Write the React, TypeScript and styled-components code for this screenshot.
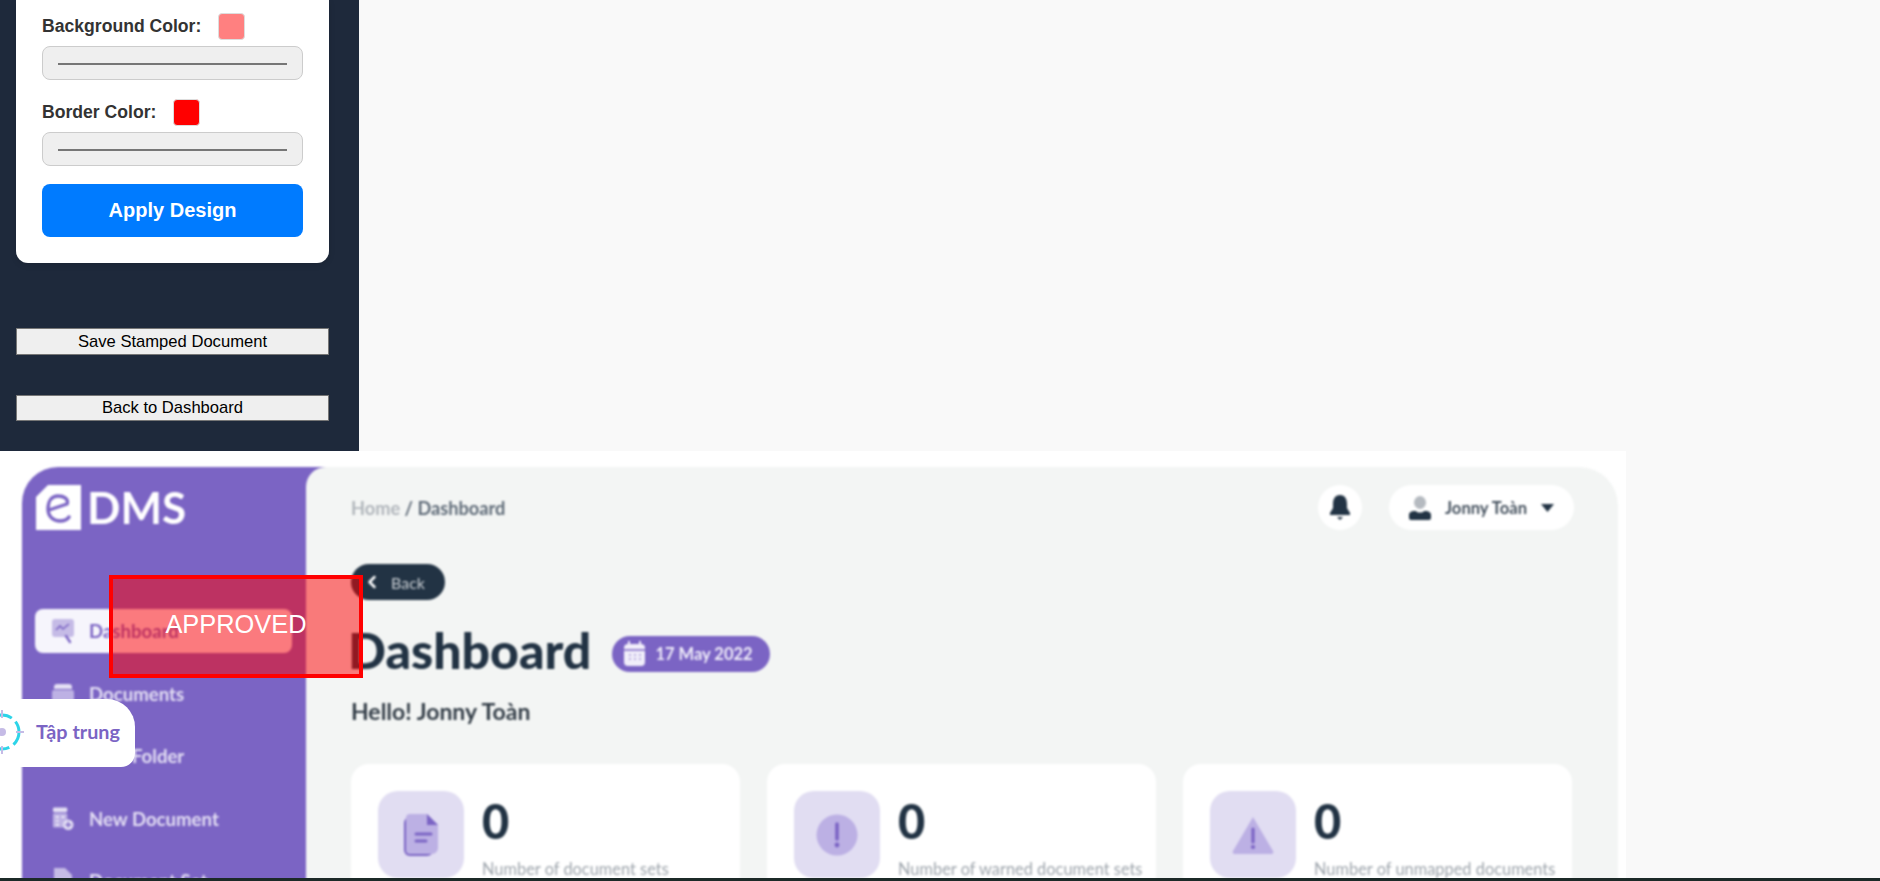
import React from 'react'
import styled, { createGlobalStyle } from 'styled-components'
import { ChevronLeft } from 'lucide-react'

const GlobalStyle = createGlobalStyle`
  html, body {
    margin: 0;
    padding: 0;
    height: 100%;
    overflow: hidden;
    background: #f9f9f9;
    font-family: "Liberation Sans", Arial, sans-serif;
  }
`

const Page = styled.div`
  position: relative;
  width: 1880px;
  height: 881px;
  overflow: hidden;
  display: flex;
  flex-direction: column;
`

const Tools = styled.aside`
  width: 359px;
  height: 451px;
  flex-shrink: 0;
  box-sizing: border-box;
  background: #1e293b;
  padding: 0 30px 30px 16px;
  display: flex;
  flex-direction: column;
  justify-content: flex-end;
  overflow: hidden;
`

const DesignCard = styled.div`
  background: #fff;
  border-radius: 0 0 12px 12px;
  padding: 13px 26px 26px;
  display: flex;
  flex-direction: column;
  box-shadow: 0 2px 6px rgba(0, 0, 0, 0.12);
`

const LabelRow = styled.div`
  display: flex;
  align-items: center;
  gap: ${(p: { $gap: number }) => p.$gap}px;
  height: 27px;
  color: #333;
  font-size: 17.6px;
  font-weight: 700;
  line-height: 25px;
  margin-bottom: 6px;
`

const Swatch = styled.span<{ $color: string }>`
  width: 27px;
  height: 27px;
  margin-left: -1px;
  box-sizing: border-box;
  border-radius: 4px;
  border: 1px solid #ddd;
  background: ${(p) => p.$color};
`

const ColorField = styled.div`
  height: 34px;
  box-sizing: border-box;
  border: 1px solid #ccc;
  border-radius: 8px;
  background: #efefef;
  padding: 0 15px;
  display: flex;
  align-items: center;
  margin-bottom: 19px;
`

const FieldLine = styled.span`
  display: block;
  width: 100%;
  height: 2px;
  background: #767676;
  margin-top: 2px;
`

const ApplyButton = styled.button`
  height: 53px;
  margin-top: -1px;
  border: 0;
  border-radius: 8px;
  background: #007bff;
  color: #fff;
  font-family: inherit;
  font-size: 20px;
  font-weight: 700;
`

const PlainButton = styled.button<{ $top: number; $height: number }>`
  height: ${(p) => p.$height}px;
  flex-shrink: 0;
  margin-top: ${(p) => p.$top}px;
  padding: 0;
  box-sizing: border-box;
  border: 1px solid #767676;
  border-radius: 0;
  background: #efefef;
  color: #000;
  font-family: inherit;
  font-size: 16.6px;
`

const Shot = styled.div`
  width: 1626px;
  height: 427px;
  flex-shrink: 0;
  box-sizing: border-box;
  background: #fff;
  padding: 16px 8px 0 22px;
  overflow: hidden;
  font-family: Lato, "Noto Sans", sans-serif;
`

const Frame = styled.div`
  display: flex;
  height: 420px;
  overflow: hidden;
  border-radius: 36px 38px 0 0;
  background: linear-gradient(to right, #7b64c4 320px, transparent 320px);
  filter: blur(1px);
`

const SideNav = styled.nav`
  width: 284px;
  flex-shrink: 0;
  box-sizing: border-box;
  padding: 18px 14px 0 13px;
  display: flex;
  flex-direction: column;
`

const Brand = styled.div`
  display: flex;
  align-items: center;
  gap: 6px;
  height: 45px;
  margin: 0 0 79px 1px;
  color: #fff;
  font-size: 44px;
  line-height: 45px;
  font-weight: 700;
`

const NavItem = styled.div<{ $active?: boolean }>`
  height: 44px;
  flex-shrink: 0;
  display: flex;
  align-items: center;
  gap: 15px;
  padding-left: 17px;
  margin-bottom: 18.5px;
  border-radius: 8px;
  background: ${(p) => (p.$active ? '#f6f5fc' : 'transparent')};
  color: ${(p) => (p.$active ? '#7b64c4' : '#e4dff4')};
  font-size: 18.6px;
  font-weight: 700;
  svg { flex-shrink: 0; }
`

const Main = styled.main`
  flex: 1;
  min-width: 0;
  box-sizing: border-box;
  background: #f3f5f4;
  border-radius: 20px 38px 0 0;
  padding: 18px 44px 0 45px;
  display: flex;
  flex-direction: column;
  align-items: flex-start;
`

const TopBar = styled.header`
  align-self: stretch;
  height: 45px;
  flex-shrink: 0;
  display: flex;
  align-items: center;
  justify-content: space-between;
`

const Crumbs = styled.div`
  font-size: 18.2px;
  font-weight: 700;
  color: #5f6b78;
  span { color: #b0b5bb; }
`

const UserArea = styled.div`
  display: flex;
  align-items: center;
  gap: 27px;
`

const BellButton = styled.div`
  width: 44px;
  height: 45px;
  border-radius: 50%;
  background: #fff;
  display: flex;
  align-items: center;
  justify-content: center;
`

const UserPill = styled.div`
  width: 185px;
  height: 45px;
  box-sizing: border-box;
  padding-left: 20px;
  border-radius: 23px;
  background: #fff;
  display: flex;
  align-items: center;
  gap: 14px;
  font-size: 16.6px;
  font-weight: 700;
  color: #46525f;
`

const BackPill = styled.div`
  margin-top: 34px;
  width: 94px;
  height: 36px;
  flex-shrink: 0;
  box-sizing: border-box;
  padding-left: 11px;
  border-radius: 18px;
  background: #223344;
  color: #c9ced3;
  display: flex;
  align-items: center;
  gap: 9px;
  font-size: 16px;
`

const TitleRow = styled.div`
  margin-top: 19px;
  display: flex;
  align-items: center;
  gap: 21px;
  height: 62px;
  flex-shrink: 0;
`

const Title = styled.h1`
  margin: 0 0 0 -3px;
  font-size: 50px;
  font-weight: 900;
  color: #223344;
  line-height: 62px;
`

const DatePill = styled.div`
  width: 158px;
  height: 36px;
  margin-top: 8px;
  box-sizing: border-box;
  padding-left: 12px;
  border-radius: 18px;
  background: #7b64c4;
  color: #f1eefa;
  display: flex;
  align-items: center;
  gap: 10px;
  font-size: 16.5px;
  font-weight: 700;
`

const Hello = styled.div`
  margin-top: 16px;
  font-size: 23px;
  font-weight: 700;
  color: #343e48;
`

const Cards = styled.div`
  margin-top: 39px;
  align-self: stretch;
  display: grid;
  grid-template-columns: repeat(3, 389px);
  column-gap: 27px;
`

const StatCard = styled.div`
  height: 160px;
  box-sizing: border-box;
  background: #fff;
  border-radius: 18px;
  padding: 27px 0 0 27px;
  display: flex;
  gap: 18px;
`

const IconTile = styled.div`
  width: 86px;
  height: 87px;
  flex-shrink: 0;
  border-radius: 20px;
  background: #e1ddf2;
  display: flex;
  align-items: center;
  justify-content: center;
`

const StatText = styled.div`
  display: flex;
  flex-direction: column;
  padding-top: 2px;
`

const StatValue = styled.div`
  font-size: 47px;
  line-height: 56px;
  font-weight: 900;
  color: #223344;
`

const StatLabel = styled.div`
  margin-top: 10px;
  font-size: 16.4px;
  white-space: nowrap;
  color: #9ea5ac;
`

const Stamp = styled.div`
  position: absolute;
  left: 109px;
  top: 575px;
  width: 254px;
  height: 103px;
  box-sizing: border-box;
  border: 4px solid #f00;
  background: rgba(255, 0, 0, 0.5);
  color: #fff;
  font-size: 25.4px;
  display: flex;
  align-items: center;
  justify-content: center;
  padding-bottom: 5px;
`

const FocusTab = styled.div`
  position: absolute;
  left: 0;
  top: 699px;
  width: 135px;
  height: 68px;
  box-sizing: border-box;
  padding: 0 0 4px 36px;
  border-radius: 0 28px 14px 0;
  background: #fff;
  color: #7b64c4;
  display: flex;
  align-items: center;
  font-family: Lato, "Noto Sans", sans-serif;
  font-size: 19.8px;
  font-weight: 700;
  overflow: hidden;
`

const FocusIcon = styled.svg`
  position: absolute;
  left: -20px;
  top: 11px;
`

const BottomEdge = styled.div`
  height: 3px;
  flex-shrink: 0;
  background: #1c2a28;
`

const LogoMark = () => (
  <svg width="45" height="45" viewBox="0 0 45 45">
    <path d="M12 0H45V45H0V12Z" fill="#fff" />
    <path
      d="M13 25 L31 19 C33 14 28 11 22 11 C15 11 12 17 12 24 C12 32 18 36 24 36 C28 36 31 35 33 32"
      fill="none"
      stroke="#7b64c4"
      strokeWidth="3.4"
      strokeLinecap="round"
    />
  </svg>
)

const ChartIcon = () => (
  <svg width="22" height="26" viewBox="0 0 22 26">
    <rect width="22" height="18" y="1" rx="3" fill="#c5bbe6" />
    <path d="M4 12l4-4 3 3 6-5" fill="none" stroke="#7b64c4" strokeWidth="1.6" />
    <path d="M14 18l4 6" stroke="#7b64c4" strokeWidth="2.4" strokeLinecap="round" />
  </svg>
)

const TrayIcon = () => (
  <svg width="22" height="22" viewBox="0 0 22 22">
    <path d="M2 4a3 3 0 0 1 3-3h12a3 3 0 0 1 3 3v2H2Z" fill="#e4dff4" />
    <rect y="7" width="22" height="13" rx="2" fill="#bdb1e4" />
  </svg>
)

const NewDocIcon = () => (
  <svg width="22" height="25" viewBox="0 0 23 25">
    <rect x="1" y="1" width="15" height="5" rx="1.5" fill="#e4dff4" />
    <rect x="1" y="7" width="15" height="15" rx="1.5" fill="#bdb1e4" />
    <path d="M4 11h3M10 11h3M4 15h3M4 19h3" stroke="#fff" strokeWidth="1.5" />
    <circle cx="17" cy="19" r="5.5" fill="#e4dff4" />
    <path d="M14 19h6M17 16v6" stroke="#7b64c4" strokeWidth="1.5" />
  </svg>
)

const SetIcon = () => (
  <svg width="22" height="26" viewBox="0 0 22 26">
    <path d="M2 0h11l7 7v19H2Z" fill="#c5bbe6" />
  </svg>
)

const BellIcon = () => (
  <svg width="20" height="25" viewBox="0 0 20 25">
    <path d="M10 0c5 0 7 4 7 9v4l3 5v2H0v-2l3-5V9c0-5 2-9 7-9Z" fill="#223344" />
    <path d="M7 22h6l-3 3Z" fill="#223344" />
  </svg>
)

const UserIcon = () => (
  <svg width="22" height="24" viewBox="0 0 22 24">
    <ellipse cx="11" cy="6.5" rx="6" ry="6.5" fill="#b5bac0" />
    <path d="M0 19c0-3 3-4 5-4h2c1 2 7 2 8 0h2c2 0 5 1 5 4v3a2 2 0 0 1-2 2H2a2 2 0 0 1-2-2Z" fill="#223344" />
  </svg>
)

const Caret = () => (
  <svg width="13" height="8" viewBox="0 0 13 8">
    <path d="M0 0h13L6.500 8Z" fill="#223344" />
  </svg>
)

const CalendarIcon = () => (
  <svg width="21" height="26" viewBox="0 0 21 26">
    <rect y="3" width="21" height="22" rx="4" fill="#f1eefa" />
    <path d="M5 0v5M16 0v5" stroke="#f1eefa" strokeWidth="2" />
    <path d="M0 9h21" stroke="#7b64c4" strokeWidth="1.5" />
    <path d="M5 14h2M10 14h2M15 14h2M5 18h2M10 18h2M15 18h2" stroke="#b8ade0" strokeWidth="2" />
  </svg>
)

const FileTileIcon = () => (
  <svg width="34" height="42" viewBox="0 0 34 42">
    <rect y="3" width="29" height="39" rx="6" fill="#7b64c4" />
    <path d="M6 0h17l11 11v23a6 6 0 0 1-6 6H6a4 4 0 0 1-4-4V4a4 4 0 0 1 4-4Z" fill="#bcb0e4" />
    <path d="M23 0l11 11H23Z" fill="#7b64c4" />
    <path d="M12 20h15M12 27h10" stroke="#7b64c4" strokeWidth="3" strokeLinecap="round" />
  </svg>
)

const WarnTileIcon = () => (
  <svg width="42" height="42" viewBox="0 0 42 42">
    <circle cx="21" cy="21" r="20.5" fill="#bcb0e4" />
    <path d="M21 10v15" stroke="#7b64c4" strokeWidth="3.600" strokeLinecap="round" />
    <circle cx="21" cy="31" r="2.400" fill="#7b64c4" />
  </svg>
)

const TriangleTileIcon = () => (
  <svg width="42" height="39" viewBox="0 0 42 39">
    <path d="M21 2 41 36a2 2 0 0 1-2 3H3a2 2 0 0 1-2-3Z" fill="#bcb0e4" />
    <path d="M21 14v13" stroke="#7b64c4" strokeWidth="3.200" strokeLinecap="round" />
    <circle cx="21" cy="32" r="2.100" fill="#7b64c4" />
  </svg>
)

const stats = [
  { label: 'Number of document sets', icon: <FileTileIcon /> },
  { label: 'Number of warned document sets', icon: <WarnTileIcon /> },
  { label: 'Number of unmapped documents', icon: <TriangleTileIcon /> },
]

function App() {
  return (
    <Page>
      <GlobalStyle />
      <Tools>
        <DesignCard>
          <LabelRow $gap={18}>
            Background Color:
            <Swatch $color="#ff8080" />
          </LabelRow>
          <ColorField>
            <FieldLine />
          </ColorField>
          <LabelRow $gap={18}>
            Border Color:
            <Swatch $color="#ff0000" />
          </LabelRow>
          <ColorField>
            <FieldLine />
          </ColorField>
          <ApplyButton>Apply Design</ApplyButton>
        </DesignCard>
        <PlainButton $top={65} $height={27}>Save Stamped Document</PlainButton>
        <PlainButton $top={40} $height={26}>Back to Dashboard</PlainButton>
      </Tools>

      <Shot>
        <Frame>
          <SideNav>
            <Brand>
              <LogoMark />
              DMS
            </Brand>
            <NavItem $active>
              <ChartIcon />
              Dashboard
            </NavItem>
            <NavItem>
              <TrayIcon />
              Documents
            </NavItem>
            <NavItem>
              <TrayIcon />
              New Folder
            </NavItem>
            <NavItem>
              <NewDocIcon />
              New Document
            </NavItem>
            <NavItem>
              <SetIcon />
              Document Set
            </NavItem>
          </SideNav>
          <Main>
            <TopBar>
              <Crumbs>
                <span>Home</span> / Dashboard
              </Crumbs>
              <UserArea>
                <BellButton>
                  <BellIcon />
                </BellButton>
                <UserPill>
                  <UserIcon />
                  Jonny Toàn
                  <Caret />
                </UserPill>
              </UserArea>
            </TopBar>
            <BackPill>
              <ChevronLeft size={20} color="#fff" strokeWidth={3} />
              Back
            </BackPill>
            <TitleRow>
              <Title>Dashboard</Title>
              <DatePill>
                <CalendarIcon />
                17 May 2022
              </DatePill>
            </TitleRow>
            <Hello>Hello! Jonny Toàn</Hello>
            <Cards>
              {stats.map((s) => (
                <StatCard key={s.label}>
                  <IconTile>{s.icon}</IconTile>
                  <StatText>
                    <StatValue>0</StatValue>
                    <StatLabel>{s.label}</StatLabel>
                  </StatText>
                </StatCard>
              ))}
            </Cards>
          </Main>
        </Frame>
      </Shot>
      <BottomEdge />

      <Stamp>APPROVED</Stamp>
      <FocusTab>
        <FocusIcon width="44" height="44" viewBox="0 0 44 44">
          <circle cx="22" cy="22" r="17" fill="none" stroke="#2dd4e8" strokeWidth="3" strokeDasharray="14 5" />
          <circle cx="22" cy="22" r="4" fill="#c5bbe6" />
          <path d="M22 0v8M22 36v8M36 22h8" stroke="#c5bbe6" strokeWidth="2" />
        </FocusIcon>
        Tập trung
      </FocusTab>
    </Page>
  )
}

export default App
